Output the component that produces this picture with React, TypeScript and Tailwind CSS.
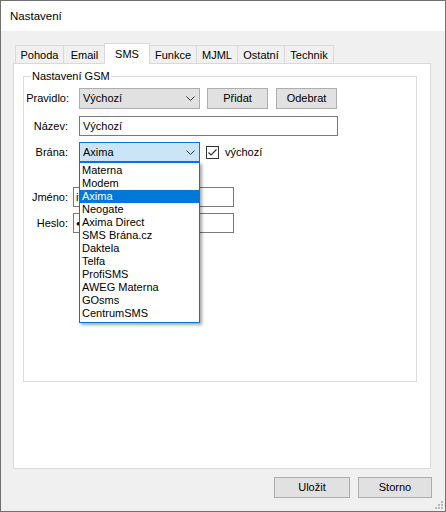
import React from 'react';

const tabs = [
  { label: 'Pohoda', w: 'w-[49px]', first: true },
  { label: 'Email', w: 'w-[43px]' },
  { label: 'SMS', w: 'w-[46px]', active: true },
  { label: 'Funkce', w: 'w-[48px]' },
  { label: 'MJML', w: 'w-[42px]' },
  { label: 'Ostatní', w: 'w-[48px]' },
  { label: 'Technik', w: 'w-[50px]' },
];

const gateways = [
  'Materna',
  'Modem',
  'Axima',
  'Neogate',
  'Axima Direct',
  'SMS Brána.cz',
  'Daktela',
  'Telfa',
  'ProfiSMS',
  'AWEG Materna',
  'GOsms',
  'CentrumSMS',
];

function Chevron() {
  return (
    <svg width="9" height="5" viewBox="0 0 9 5" className="shrink-0">
      <polyline points="0.5,0.5 4.5,4.5 8.5,0.5" fill="none" stroke="#333" strokeWidth="1" />
    </svg>
  );
}

function Button({ children, w = 'w-[61px]', h = 'h-[21px]' }: { children: React.ReactNode; w?: string; h?: string }) {
  return (
    <div className={`${w} ${h} bg-[#e1e1e1] border border-[#adadad] flex items-center justify-center`}>
      {children}
    </div>
  );
}

export default function App() {
  const selected = 'Axima';

  return (
    <div
      className="w-[446px] h-[512px] border border-[#707070] flex flex-col text-[11px] leading-[13px] text-black relative overflow-hidden"
      style={{ fontFamily: '"Liberation Sans", Arial, sans-serif' }}
    >
      {/* Title bar */}
      <div className="h-[30px] bg-white flex items-center pl-[9px] text-[11.5px]">Nastavení</div>

      {/* Body */}
      <div className="flex-1 bg-[#f0f0f0] flex flex-col pl-[12px] pt-[12px]">
        {/* Tab header */}
        <div className="flex items-end h-[20px] pl-[2px] relative z-10">
          {tabs.map((t) =>
            t.active ? (
              <div
                key={t.label}
                className={`${t.w} -ml-[2px] h-[21px] -mb-px bg-white border border-b-0 border-[#d9d9d9] flex items-start justify-center pt-[4px]`}
              >
                {t.label}
              </div>
            ) : (
              <div
                key={t.label}
                className={`${t.w} ${t.first ? '' : '-ml-px'} h-[18px] bg-[#f0f0f0] border border-b-0 border-[#d9d9d9] flex items-center justify-center pt-[1px]`}
              >
                {t.label}
              </div>
            )
          )}
        </div>

        {/* Tab panel */}
        <div className="w-[418px] h-[406px] bg-white border border-[#d9d9d9] pl-[9px] pt-[6px]">
          <fieldset className="w-[394px] h-[312px] border border-[#dcdcdc]">
            <legend className="ml-[7px] px-[1px] leading-[13px]">Nastavení GSM</legend>

            <div className="flex flex-col pt-[5px]">
              {/* Pravidlo */}
              <div className="flex items-center">
                <div className="w-[45px] text-right">Pravidlo:</div>
                <div className="ml-[10px] w-[121px] h-[21px] bg-[#e1e1e1] border border-[#adadad] flex items-center justify-between pl-[3px] pr-[4px]">
                  <span>Výchozí</span>
                  <Chevron />
                </div>
                <div className="ml-[7px]">
                  <Button>Přidat</Button>
                </div>
                <div className="ml-[8px]">
                  <Button>Odebrat</Button>
                </div>
              </div>

              {/* Název */}
              <div className="flex items-center mt-[7px]">
                <div className="w-[45px] text-right pr-px">Název:</div>
                <div className="ml-[10px] w-[259px] h-[20px] border border-[#7a7a7a] flex items-center pl-[3px]">
                  Výchozí
                </div>
              </div>

              {/* Brána */}
              <div className="flex items-center mt-[6px]">
                <div className="w-[45px] text-right pr-px">Brána:</div>
                <div className="ml-[10px] w-[121px] h-[20px] relative z-20">
                  <div className="w-full h-full bg-[#cce4f7] border border-[#0078d7] flex items-center justify-between pl-[3px] pr-[4px]">
                    <span>{selected}</span>
                    <Chevron />
                  </div>
                  {/* Open dropdown list */}
                  <div className="absolute left-0 top-full w-[121px] bg-white border border-[#0078d7] pt-px pb-[2px] shadow-[2px_2px_3px_rgba(0,0,0,0.35)]">
                    {gateways.map((g) => (
                      <div
                        key={g}
                        className={`h-[13px] pl-[2px] leading-[13px] ${g === selected ? 'bg-[#0078d7] text-white' : ''}`}
                      >
                        {g}
                      </div>
                    ))}
                  </div>
                </div>
                <div className="ml-[6px] w-[13px] h-[13px] border border-[#333] bg-white flex items-center justify-center">
                  <svg width="11" height="11" viewBox="0 0 11 11">
                    <polyline points="1.5,5.5 4,8 9.5,2.5" fill="none" stroke="#333" strokeWidth="1.2" />
                  </svg>
                </div>
                <span className="ml-[6px]">výchozí</span>
              </div>

              {/* Jméno */}
              <div className="flex items-center mt-[25px]">
                <div className="w-[45px] text-right pr-px">Jméno:</div>
                <div className="ml-[4px] w-[161px] h-[20px] border border-[#7a7a7a] flex items-center pl-[2px]">
                  if
                </div>
              </div>

              {/* Heslo */}
              <div className="flex items-center mt-[6px]">
                <div className="w-[45px] text-right pr-px">Heslo:</div>
                <div className="ml-[4px] w-[161px] h-[20px] border border-[#7a7a7a] flex items-center pl-[2px] text-[8px] tracking-[1.5px] overflow-hidden">
                  ●●●●●●●●●●●●●●●●●●
                </div>
              </div>
            </div>
          </fieldset>
        </div>

        {/* Footer */}
        <div className="flex justify-end gap-[8px] mt-[8px] pr-[13px]">
          <Button w="w-[76px]">Uložit</Button>
          <Button w="w-[74px]">Storno</Button>
        </div>
      </div>

      {/* Resize grip */}
      <svg width="8" height="8" viewBox="0 0 8 8" className="absolute right-[2px] bottom-[2px]">
        {[
          [6, 0],
          [3, 3],
          [6, 3],
          [0, 6],
          [3, 6],
          [6, 6],
        ].map(([x, y]) => (
          <rect key={`${x}-${y}`} x={x} y={y} width="2" height="2" fill="#b8b8b8" />
        ))}
      </svg>
    </div>
  );
}
